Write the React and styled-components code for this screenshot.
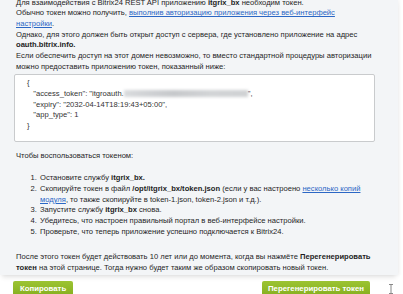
import { styled, createGlobalStyle } from "styled-components"

const Global = createGlobalStyle`
    html, body {
        margin: 0;
        padding: 0;
        background: #ffffff;
        overflow: hidden;
    }
    body {
        font-family: "Liberation Sans", Arial, sans-serif;
        font-size: 7.6px;
        color: #1e1e1e;
    }
`

const Page = styled.div`
    position: relative;
    width: 403px;
    height: 294px;
    overflow: hidden;
    display: flex;
    flex-direction: column;
`

const Panel = styled.div`
    width: 398px;
    margin-top: -2.5px;
    padding: 0 12px 1px 16px;
    box-sizing: border-box;
    background: #f3f5f7;
    line-height: 10.7px;
    box-shadow: 0 4px 5px -2px rgba(0, 0, 0, 0.12), 2px 0 3px rgba(0, 0, 0, 0.04);
    p {
        margin: 0;
    }
`

const Link = styled.a`
    color: #2b67c5;
    text-decoration: underline;
`

const TokenBox = styled.pre`
    margin: 2px 0 9px -2px;
    width: 361px;
    box-sizing: border-box;
    padding: 3px 12px 10px;
    background: #ffffff;
    border: 1px solid #c9cbcd;
    border-radius: 2px;
    font-family: "Liberation Sans", Arial, sans-serif;
    font-size: 7.6px;
    line-height: 10.6px;
    color: #333;
    white-space: pre;
`

const Blur = styled.span`
    display: inline-block;
    width: 124px;
    height: 7px;
    vertical-align: -1px;
    background: linear-gradient(90deg, #d9dbdd, #c6c8cb 40%, #d2d4d6 70%, #cfd1d3);
    filter: blur(1.5px);
`

const Steps = styled.ol`
    margin: 11px 0 15px 0;
    padding-left: 23px;
    li {
        padding-left: 1px;
    }
`

const Footer = styled.div`
    display: flex;
    justify-content: space-between;
    align-items: flex-start;
    padding: 6px 33px 0 13px;
`

const Button = styled.button`
    height: 16px;
    padding: 0 ${p => p.$wide ? "6px" : "7px"};
    border: none;
    border-radius: 2px;
    background: linear-gradient(#9cc432, #84ad1e);
    color: #ffffff;
    font-family: "Liberation Sans", Arial, sans-serif;
    font-weight: bold;
    font-size: 7.8px;
    box-shadow: inset 0 -1px 0 rgba(0, 0, 0, 0.15);
`

const Cursor = styled.svg`
    position: absolute;
    left: 388px;
    top: 284px;
`

const App = () => {
    return (
        <Page>
            <Global />
            <Panel>
                <p>Для взаимодействия с Bitrix24 REST API приложению <b>itgrix_bx</b> необходим токен.</p>
                <p>Обычно токен можно получить, <Link>выполнив авторизацию приложения через веб-интерфейс<br />настройки</Link>.</p>
                <p>Однако, для этого должен быть открыт доступ с сервера, где установлено приложение на адрес <b>oauth.bitrix.info.</b></p>
                <p>Если обеспечить доступ на этот домен невозможно, то вместо стандартной процедуры авторизации можно предоставить приложению токен, показанный ниже:</p>
                <TokenBox>{"{\n   \"access_token\": \"itgroauth."}<Blur />{"\",\n   \"expiry\": \"2032-04-14T18:19:43+05:00\",\n   \"app_type\": 1\n}"}</TokenBox>
                <p>Чтобы воспользоваться токеном:</p>
                <Steps>
                    <li>Остановите службу <b>itgrix_bx.</b></li>
                    <li>Скопируйте токен в файл <b>/opt/itgrix_bx/token.json</b> (если у вас настроено <Link>несколько копий модуля</Link>, то также скопируйте в token-1.json, token-2.json и т.д.).</li>
                    <li>Запустите службу <b>itgrix_bx</b> снова.</li>
                    <li>Убедитесь, что настроен правильный портал в веб-интерфейсе настройки.</li>
                    <li>Проверьте, что теперь приложение успешно подключается к Bitrix24.</li>
                </Steps>
                <p>После этого токен будет действовать 10 лет или до момента, когда вы нажмёте <b>Перегенерировать токен</b> на этой странице. Тогда нужно будет таким же образом скопировать новый токен.</p>
            </Panel>
            <Footer>
                <Button>Копировать</Button>
                <Button $wide>Перегенерировать токен</Button>
            </Footer>
            <Cursor width="6" height="10" viewBox="0 0 6 10">
                <path d="M1 0.5h4M1 9.5h4M3 0.5v9" stroke="#888" strokeWidth="1" fill="none" />
            </Cursor>
        </Page>
    )
}

export default App
